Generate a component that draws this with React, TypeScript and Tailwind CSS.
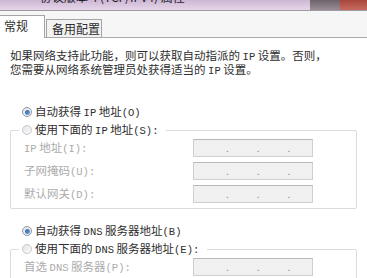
import React from "react";

function L({ children }: { children: React.ReactNode }) {
  return <span className="font-['Liberation_Mono'] text-[10.5px]">{children}</span>;
}

function Radio({ on, disabled }: { on?: boolean; disabled?: boolean }) {
  return (
    <span
      className={
        "w-[10px] h-[10px] rounded-full border flex items-center justify-center shrink-0 bg-gradient-to-br from-[#e4e4e4] to-[#fafafa] " +
        (disabled ? "border-[#c4cbd2]" : "border-[#8a98a6]")
      }
    >
      {on && <span className="w-[5px] h-[5px] rounded-full bg-gradient-to-br from-[#2a5fa0] to-[#7aa8d8]" />}
    </span>
  );
}

function IpBox() {
  return (
    <div className="w-[120px] h-[18px] border border-[#cfcfcf] border-t-[#b8b8b8] bg-[#f0f0f0] flex items-center pl-[32px] gap-[28px] text-[#8c8c8c] text-[10px] leading-none">
      <span>.</span>
      <span>.</span>
      <span>.</span>
    </div>
  );
}

function Field({ label }: { label: React.ReactNode }) {
  return (
    <div className="flex items-center h-[18px]">
      <div className="w-[182px] pl-[13px] text-[#ababab]">{label}</div>
      <IpBox />
    </div>
  );
}

export default function App() {
  return (
    <div className="w-[367px] h-[278px] overflow-hidden bg-white font-['Noto_Sans_CJK_SC',sans-serif] text-[11.5px] text-[#2e2e2e]">
      <div className="h-[11px] flex bg-gradient-to-b from-[#cdb6d4] to-[#e6d6e9] border-b border-[#9c9aa4] overflow-hidden">
        <div className="pl-[40px] mt-[-10px] text-[12px] leading-[14px] text-[#1d1d2a] whitespace-nowrap flex-1">
          协议版本 4 (TCP/IPv4) 属性
        </div>
        <div className="w-[30px] bg-gradient-to-b from-[#6e646c] to-[#9a8d95]" />
        <div className="w-[27px] bg-gradient-to-b from-[#a8463c] to-[#c76b5e]" />
      </div>

      <div className="h-[27px] bg-[#f6f6f6] border-b border-[#a9a9a9] flex items-end">
        <div className="w-[45px] h-[23px] bg-white border border-l-0 border-b-0 border-[#a4a4a4] pl-[4px] pt-[3px] text-[12px] leading-[14px] mb-[-1px]">
          常规
        </div>
        <div className="ml-[1px] w-[56px] h-[18px] bg-[#f2f2f2] border border-b-0 border-[#a4a4a4] pl-[5px] text-[12px] leading-[17px]">
          备用配置
        </div>
      </div>

      <div className="pt-[11px]">
        <div className="pl-[10px] leading-[12px] whitespace-nowrap">
          <div>
            如果网络支持此功能，则可以获取自动指派的 <L>IP</L> 设置。否则，
          </div>
          <div>
            您需要从网络系统管理员处获得适当的 <L>IP</L> 设置。
          </div>
        </div>

        <div className="mt-[26px] pl-[22px] h-[18px] flex items-center gap-[3px]">
          <Radio on />
          <span>
            自动获得 <L>IP</L> 地址<L>(O)</L>
          </span>
        </div>

        <fieldset className="mx-[10px] border border-[#dcdcdc] rounded-[2px] pb-[5px] flex flex-col gap-[5px]">
          <legend className="ml-[8px] px-[3px] pr-[8px]">
            <span className="h-[18px] flex items-center gap-[3px]">
              <Radio disabled />
              <span>
                使用下面的 <L>IP</L> 地址<L>(S):</L>
              </span>
            </span>
          </legend>
          <Field label={<>
            <L>IP</L> 地址<L>(I):</L>
          </>} />
          <Field label={<>子网掩码<L>(U):</L></>} />
          <Field label={<>默认网关<L>(D):</L></>} />
        </fieldset>

        <div className="mt-[13px] pl-[22px] h-[18px] flex items-center gap-[3px]">
          <Radio on />
          <span>
            自动获得 <L>DNS</L> 服务器地址<L>(B)</L>
          </span>
        </div>

        <fieldset className="mx-[10px] border border-[#dcdcdc] rounded-[2px] pb-[5px] flex flex-col gap-[5px]">
          <legend className="ml-[8px] px-[3px] pr-[8px]">
            <span className="h-[18px] flex items-center gap-[3px]">
              <Radio disabled />
              <span>
                使用下面的 <L>DNS</L> 服务器地址<L>(E):</L>
              </span>
            </span>
          </legend>
          <Field label={<>首选 <L>DNS</L> 服务器<L>(P):</L></>} />
        </fieldset>
      </div>
    </div>
  );
}
